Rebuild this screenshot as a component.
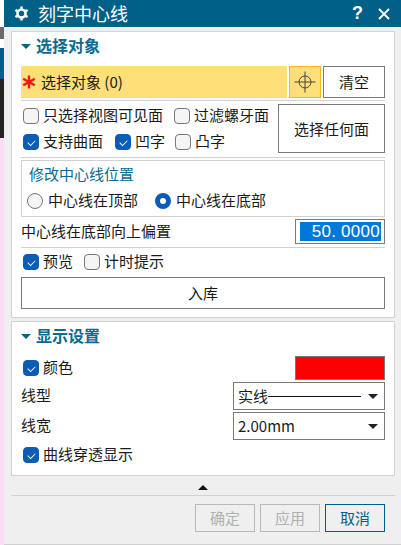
<div class="screen">
	<aside class="backdrop">
		<span class="b-white"></span>
		<span class="b-glyph"></span>
		<span class="b-white2"></span>
		<span class="b-teal"></span>
		<span class="b-dark"></span>
		<span class="b-pink"></span>
	</aside>
	<main class="dialog">
		<header class="titlebar">
			<svg class="gear" viewBox="0 0 16 16" width="15" height="15">
				<circle cx="8" cy="8" r="4.3" fill="none" stroke="#fff" stroke-width="2.8" />
				<path d="M8 0.5V3M8 13V15.5M1.5 4.2L3.7 5.5M12.3 10.5L14.5 11.8M1.5 11.8L3.7 10.5M12.3 5.5L14.5 4.2" stroke="#fff" stroke-width="2.6" fill="none" />
			</svg>
			<span class="title">刻字中心线</span>
			<span class="help">?</span>
			<svg class="close" viewBox="0 0 12 12" width="12" height="12">
				<path d="M1 1L11 11M11 1L1 11" stroke="#fff" stroke-width="1.8" fill="none" />
			</svg>
		</header>

		<section class="panel first">
			<h2 class="head"><i class="caret"></i>选择对象</h2>
			<div class="select-row">
				<div class="select-field">
					<svg class="star" viewBox="0 0 14 14" width="14" height="14">
						<path d="M7 0.5V13.5M1.2 3.7L12.8 10.3M12.8 3.7L1.2 10.3" stroke="#f01818" stroke-width="2.4" fill="none" />
					</svg>
					选择对象 (0)
				</div>
				<div class="target">
					<svg viewBox="0 0 22 22" width="22" height="22">
						<circle cx="11" cy="11" r="6" fill="none" stroke="#444" stroke-width="1" />
						<path d="M11 0.5V21.5M0.5 11H21.5" stroke="#444" stroke-width="1" />
					</svg>
				</div>
				<button class="btn clear">清空</button>
			</div>
			<div class="rule"></div>
			<div class="options">
				<div class="option-lines">
					<div class="line">
						<label class="check w151"><i class="box"></i>只选择视图可见面</label>
						<label class="check"><i class="box"></i>过滤螺牙面</label>
					</div>
					<div class="line">
						<label class="check w92"><i class="box on"></i>支持曲面</label>
						<label class="check w60"><i class="box on"></i>凹字</label>
						<label class="check"><i class="box"></i>凸字</label>
					</div>
				</div>
				<button class="btn any">选择任何面</button>
			</div>
			<div class="rule r2"></div>
			<div class="group">
				<div class="group-title">修改中心线位置</div>
				<div class="radios">
					<label class="radio w128"><i class="dot"></i>中心线在顶部</label>
					<label class="radio"><i class="dot on"></i>中心线在底部</label>
				</div>
			</div>
			<div class="offset-row">
				<span>中心线在底部向上偏置</span>
				<div class="num"><span class="sel">50<span class="point">.</span>0000</span></div>
			</div>
			<div class="rule r3"></div>
			<div class="line preview">
				<label class="check w61"><i class="box on"></i>预览</label>
				<label class="check"><i class="box"></i>计时提示</label>
			</div>
			<button class="btn store">入库</button>
		</section>

		<section class="panel second">
			<h2 class="head"><i class="caret"></i>显示设置</h2>
			<div class="color-row">
				<label class="check"><i class="box on"></i>颜色</label>
				<div class="swatch"></div>
			</div>
			<div class="field-row">
				<span>线型</span>
				<div class="dropdown">
					<span class="solid">实线<i class="stroke"></i></span>
					<i class="arrow"></i>
				</div>
			</div>
			<div class="field-row">
				<span>线宽</span>
				<div class="dropdown"><span>2.00mm</span><i class="arrow"></i></div>
			</div>
			<label class="check last"><i class="box on"></i>曲线穿透显示</label>
		</section>

		<div class="collapse"><i></i></div>
		<footer class="footer">
			<button class="btn off">确定</button>
			<button class="btn off">应用</button>
			<button class="btn cancel">取消</button>
		</footer>
	</main>
</div>

<style>
	:global(body) {
		margin: 0;
		background: #fbdcf8;
	}
	.screen {
		display: flex;
		width: 401px;
		height: 545px;
		overflow: hidden;
		font-family: 'Noto Sans CJK SC', 'Liberation Sans', sans-serif;
		font-size: 15px;
		line-height: 22px;
		color: #1a1a1a;
	}
	.backdrop {
		display: flex;
		flex-direction: column;
		flex: 0 0 4px;
	}
	.backdrop span {
		display: block;
	}
	.b-white {
		height: 27px;
		background: #fff;
	}
	.b-glyph {
		height: 12px;
		background: #6a6a70;
	}
	.b-white2 {
		height: 9px;
		background: #fff;
	}
	.b-teal {
		height: 31px;
		background: #005f87;
	}
	.b-dark {
		height: 59px;
		background: #222;
	}
	.b-pink {
		flex: 1;
		background: #fbdcf8;
	}
	.dialog {
		flex: 1;
		display: flex;
		flex-direction: column;
		height: 544px;
		background: #efefef;
		border-bottom: 1px solid #d0d0d0;
	}
	.titlebar {
		display: flex;
		align-items: center;
		flex: none;
		height: 27px;
		padding-left: 10px;
		background: #006088;
		color: #fff;
	}
	.title {
		flex: 1;
		margin: 0 0 2px 9px;
		font-size: 18px;
	}
	.help {
		margin-right: 15px;
		font: bold 18px 'Liberation Sans', sans-serif;
	}
	.close {
		margin-right: 11px;
	}
	.panel {
		flex: none;
		box-sizing: border-box;
		margin: 0 6px 0 7px;
		padding: 0 9px;
		background: #fff;
		border: 1px solid #d2d2d2;
	}
	.first {
		margin-top: 4px;
		height: 287px;
	}
	.second {
		margin-top: 3px;
		height: 155px;
	}
	.head {
		display: flex;
		align-items: center;
		box-sizing: border-box;
		height: 28px;
		margin: 0;
		padding-bottom: 2px;
		font-size: 16px;
		font-weight: 700;
		color: #0a6a8f;
	}
	.caret {
		position: relative;
		top: 1px;
		width: 0;
		height: 0;
		margin-right: 5px;
		border: 5px solid transparent;
		border-top: 5px solid #0a5f86;
		border-bottom: 0;
	}
	.select-row {
		display: flex;
		height: 32px;
		margin-top: 6px;
	}
	.select-field {
		display: flex;
		align-items: center;
		gap: 5px;
		box-sizing: border-box;
		width: 266px;
		padding-left: 1px;
		background: #ffdf78;
	}
	.target {
		display: flex;
		align-items: center;
		justify-content: center;
		box-sizing: border-box;
		width: 32px;
		margin-left: 2px;
		background: #ffdf78;
		border: 1px solid #f5b91f;
	}
	.btn {
		box-sizing: border-box;
		padding: 0;
		font: inherit;
		color: inherit;
		background: #fff;
		border: 1px solid #7a7a7a;
		border-radius: 0;
	}
	.clear {
		width: 62px;
		margin-left: 2px;
	}
	.rule {
		height: 1px;
		margin-top: 2px;
		background: #d2d2d2;
	}
	.options {
		display: flex;
		justify-content: space-between;
		margin-top: 3px;
	}
	.option-lines {
		display: flex;
		flex-direction: column;
		margin-top: -1px;
	}
	.line {
		display: flex;
		align-items: center;
		height: 26px;
	}
	.check,
	.radio {
		display: flex;
		align-items: center;
		padding-bottom: 2px;
		white-space: nowrap;
	}
	.box {
		position: relative;
		top: 1px;
		flex: none;
		box-sizing: border-box;
		width: 16px;
		height: 16px;
		margin: 0 4px 0 2px;
		background: #f5f5f5;
		border: 1px solid #777;
		border-radius: 4px;
	}
	.box.on {
		background: #0a5cb4;
		border-color: #0a5cb4;
	}
	.box.on::after {
		content: '';
		position: absolute;
		left: 4.5px;
		top: 2.5px;
		width: 4px;
		height: 7px;
		border: solid #fff;
		border-width: 0 1px 1px 0;
		transform: rotate(45deg) scale(0.9);
	}
	.w151 {
		width: 151px;
	}
	.w92 {
		width: 92px;
	}
	.w60 {
		width: 60px;
	}
	.w61 {
		width: 61px;
	}
	.w128 {
		width: 128px;
	}
	.any {
		width: 107px;
		height: 49px;
	}
	.group {
		box-sizing: border-box;
		height: 57px;
		margin-top: 2px;
		border: 1px solid #d2d2d2;
	}
	.group-title {
		padding: 3px 0 0 7px;
		line-height: 20px;
		color: #0a6a8f;
	}
	.radios {
		display: flex;
		margin-top: 5px;
		padding-left: 5px;
	}
	.dot {
		position: relative;
		top: 1px;
		flex: none;
		box-sizing: border-box;
		width: 16px;
		height: 16px;
		margin-right: 5px;
		background: #f5f5f5;
		border: 1px solid #777;
		border-radius: 50%;
	}
	.dot.on {
		background: #fff;
		border: 5px solid #0a5cb4;
	}
	.offset-row {
		display: flex;
		justify-content: space-between;
		align-items: center;
		height: 25px;
		margin-top: 2px;
	}
	.offset-row > span,
	.field-row > span {
		margin-top: -2px;
	}
	.num {
		box-sizing: border-box;
		width: 90px;
		height: 25px;
		padding: 2px 3px 2px 4px;
		background: #fff;
		border: 1px solid #7a7a7a;
	}
	.sel {
		display: block;
		height: 19px;
		padding-right: 1px;
		font-family: 'Liberation Sans', sans-serif;
		font-size: 17px;
		line-height: 19px;
		letter-spacing: 0.3px;
		text-align: right;
		color: #fff;
		background: #0078d7;
	}
	.point {
		letter-spacing: 5px;
	}
	.r3 {
		margin-top: 3px;
	}
	.preview {
		height: 28px;
	}
	.store {
		display: block;
		width: 100%;
		height: 32px;
		margin-top: 1px;
	}
	.color-row {
		display: flex;
		justify-content: space-between;
		align-items: center;
		height: 24px;
		margin-top: 6px;
	}
	.swatch {
		box-sizing: border-box;
		width: 90px;
		height: 24px;
		background: #f00;
		border: 1px solid #777;
	}
	.field-row {
		display: flex;
		justify-content: space-between;
		align-items: center;
		height: 28px;
		margin-top: 2px;
	}
	.dropdown {
		display: flex;
		align-items: center;
		justify-content: space-between;
		box-sizing: border-box;
		width: 152px;
		height: 28px;
		padding: 0 6px 0 4px;
		border: 1px solid #7a7a7a;
	}
	.solid {
		display: flex;
		align-items: center;
	}
	.stroke {
		display: block;
		width: 93px;
		height: 1px;
		background: #111;
	}
	.arrow {
		width: 0;
		height: 0;
		border: 5px solid transparent;
		border-top: 5px solid #222;
		border-bottom: 0;
	}
	.last {
		margin-top: 3px;
	}
	.collapse {
		display: flex;
		justify-content: center;
		flex: none;
		height: 10px;
		padding-top: 9px;
	}
	.collapse i {
		width: 0;
		height: 0;
		border: 5px solid transparent;
		border-bottom: 5px solid #111;
		border-top: 0;
	}
	.footer {
		display: flex;
		justify-content: flex-end;
		gap: 5px;
		margin: 0 6px 0 7px;
		padding: 8px 10px 0 0;
		border-top: 1px solid #d2d2d2;
	}
	.footer .btn {
		width: 60px;
		height: 28px;
		background: #efefef;
	}
	.footer .off {
		border-color: #b8b8b8;
		color: #b0b0b0;
	}
	.footer .cancel {
		border-color: #006088;
		color: #0a5f86;
	}
</style>
